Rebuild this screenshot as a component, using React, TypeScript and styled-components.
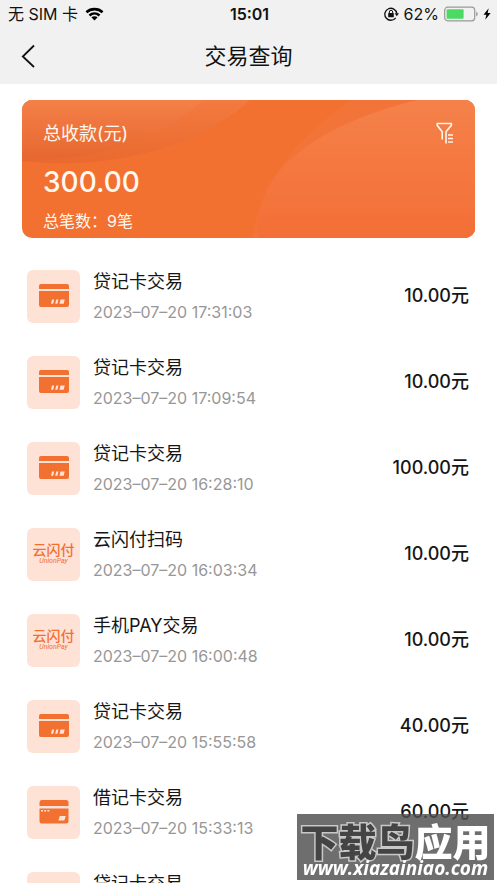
import React from "react";
import styled, { createGlobalStyle } from "styled-components";

const GlobalStyle = createGlobalStyle`
  * { box-sizing: border-box; }
  body {
    margin: 0;
    background: #fff;
    color: #161616;
    font-family: Inter, "Noto Sans CJK SC", sans-serif;
  }
  h1, p, ul { margin: 0; padding: 0; font-weight: 400; }
`;

const Screen = styled.div`
  display: flex;
  flex-direction: column;
  height: 100vh;
  overflow: hidden;
`;

const TopArea = styled.header`
  flex: none;
  background: #f1f1f1;
  color: #111;
`;

const StatusBar = styled.div`
  display: grid;
  grid-template-columns: 1fr auto 1fr;
  align-items: center;
  height: 28px;
  padding: 0 6px 0 8px;
  font-size: 16px;
  line-height: 28px;
`;

const StatusGroup = styled.div<{ $end?: boolean }>`
  display: flex;
  align-items: center;
  justify-content: ${(p) => (p.$end ? "flex-end" : "flex-start")};
  gap: ${(p) => (p.$end ? 5 : 7)}px;
`;

const Clock = styled.time`
  font-weight: 600;
`;

const NavBar = styled.nav`
  display: grid;
  grid-template-columns: 56px 1fr 56px;
  align-items: center;
  height: 56px;
`;

const IconButton = styled.button`
  display: flex;
  justify-content: center;
  padding: 0;
  border: 0;
  background: none;
  color: inherit;
  cursor: pointer;
`;

const Title = styled.h1`
  text-align: center;
  font-size: 22px;
  line-height: 32px;
`;

const Content = styled.main`
  flex: 1;
  min-height: 0;
  overflow-y: auto;
  scrollbar-width: none;
  padding: 16px 22px 0;
`;

const Summary = styled.section`
  position: relative;
  display: flex;
  justify-content: space-between;
  align-items: flex-start;
  height: 138px;
  padding: 22px 21px;
  border-radius: 10px;
  overflow: hidden;
  background: #f27030;
  color: #fff8f0;
`;

const Backdrop = styled.svg`
  position: absolute;
  inset: 0;
  width: 100%;
  height: 100%;
`;

const Totals = styled.div`
  position: relative;
`;

const TotalLabel = styled.p`
  font-size: 18px;
  line-height: 24px;
`;

const TotalAmount = styled.p`
  margin-top: 16px;
  font-size: 28px;
  font-weight: 500;
  line-height: 40px;
`;

const TotalCount = styled.p`
  margin-top: 7px;
  font-size: 16px;
  line-height: 24px;
`;

const FilterButton = styled(IconButton)`
  position: relative;
`;

const List = styled.ul`
  list-style: none;
  padding: 15px 6px 0 5px;
`;

const Row = styled.li`
  display: flex;
  align-items: center;
  gap: 13px;
  height: 86px;
`;

const Tile = styled.div`
  display: flex;
  flex-direction: column;
  align-items: center;
  justify-content: center;
  flex: none;
  width: 53px;
  height: 53px;
  border-radius: 6px;
  background: #ffe2d6;
  color: #f27030;
`;

const PayName = styled.span`
  font-size: 14px;
  font-weight: 500;
  line-height: 14px;
`;

const PaySub = styled.span`
  font-family: Roboto, sans-serif;
  font-size: 7px;
  font-style: italic;
  line-height: 8px;
`;

const Info = styled.div`
  flex: 1;
`;

const Name = styled.p`
  font-size: 18px;
  line-height: 28px;
`;

const Stamp = styled.p`
  margin-top: 4px;
  color: #979797;
  font-size: 16px;
  line-height: 24px;
`;

const Amount = styled.span`
  font-size: 18px;
  font-weight: 500;
  line-height: 28px;
`;

const Watermark = styled.aside`
  position: fixed;
  right: 3px;
  bottom: 3px;
  display: flex;
  flex-direction: column;
  align-items: center;
  width: 197px;
  height: 66px;
  padding-top: 8px;
  background: rgba(78, 78, 78, 0.82);
  color: #fff;
`;

const MarkName = styled.span`
  font-family: "Noto Sans CJK SC", sans-serif;
  font-size: 38px;
  font-weight: 900;
  line-height: 36px;
  white-space: nowrap;
`;

const MarkDark = styled.span`
  color: #444;
  -webkit-text-stroke: 3px #c8c8c8;
  paint-order: stroke fill;
`;

const MarkSite = styled.span`
  font-family: "Open Sans", sans-serif;
  font-size: 19px;
  font-weight: 700;
  font-style: italic;
  line-height: 20px;
`;

type Kind = "credit" | "debit" | "union";
interface Transaction {
  kind: Kind;
  name: string;
  time: string;
  amount: string;
}

const transactions: Transaction[] = [
  { kind: "credit", name: "贷记卡交易", time: "17:31:03", amount: "10.00" },
  { kind: "credit", name: "贷记卡交易", time: "17:09:54", amount: "10.00" },
  { kind: "credit", name: "贷记卡交易", time: "16:28:10", amount: "100.00" },
  { kind: "union", name: "云闪付扫码", time: "16:03:34", amount: "10.00" },
  { kind: "union", name: "手机PAY交易", time: "16:00:48", amount: "10.00" },
  { kind: "credit", name: "贷记卡交易", time: "15:55:58", amount: "40.00" },
  { kind: "debit", name: "借记卡交易", time: "15:33:13", amount: "60.00" },
  { kind: "credit", name: "贷记卡交易", time: "15:30:26", amount: "60.00" },
];

const WifiIcon = () => (
  <svg width="19" height="14" viewBox="0 0 20 14" fill="none" stroke="#000" strokeWidth="2.7" aria-hidden="true">
    <path d="M1.5 5.2C6.2.8 13.8.8 18.500 5.200M4.700 8.500C7.800 5.700 12.200 5.700 15.300 8.500" />
    <path d="M6.700 10.500C8.600 8.900 11.400 8.900 13.300 10.500L10 13.800Z" fill="#000" stroke="none" />
  </svg>
);

const RotationLockIcon = () => (
  <svg width="15" height="14" viewBox="0 0 15 14" fill="none" stroke="#111" strokeWidth="1.3" aria-hidden="true">
    <path d="M11.700 10.800A6 6 0 1 1 12.800 6.500" />
    <path d="M10.600 6.200H15L12.800 9.200Z" fill="#111" stroke="none" />
    <rect x="4.200" y="6" width="5.600" height="4.300" rx=".6" fill="#111" stroke="none" />
    <path d="M5.300 6V5a1.700 1.700 0 0 1 3.400 0v1" strokeWidth="1" />
  </svg>
);

const BatteryIcon = () => (
  <svg width="34" height="16" viewBox="0 0 34 16" aria-hidden="true">
    <rect x=".7" y="1.200" width="30" height="13.600" rx="3" fill="none" stroke="#999" strokeWidth="1.200" />
    <rect x="2.600" y="3.200" width="17" height="9.600" rx="1" fill="#4cd964" />
    <path d="M32.200 5.500q1.600 1 1.600 2.500t-1.600 2.500z" fill="#999" />
  </svg>
);

const BoltIcon = () => (
  <svg width="8" height="14" viewBox="0 0 9 14" aria-hidden="true">
    <path d="M6.400.4.600 7.900h3.200L2.500 13.600 8.600 5.800H5.200z" fill="#000" />
  </svg>
);

const BackIcon = () => (
  <svg width="14" height="24" viewBox="0 0 14 24" fill="none" stroke="#111" strokeWidth="1.800" aria-hidden="true">
    <path d="M13 1.500 1.800 12.500 13 23" />
  </svg>
);

const FilterIcon = () => (
  <svg width="18" height="22" viewBox="0 0 18 22" fill="none" stroke="#fff3e8" strokeWidth="1.700" strokeLinejoin="round" aria-hidden="true">
    <path d="M6.200 17.500V9.700L1.200 3.400V1.500H15.300V3.400L10 9.700V21.500" />
    <path d="M12 13h5M12 16.500h5M12 20h5" />
  </svg>
);

const SummaryBackdrop = () => (
  <Backdrop viewBox="0 0 453 138" preserveAspectRatio="none" aria-hidden="true">
    <defs>
      <linearGradient id="leftShade" x2="0" y2="1">
        <stop stopColor="#f48048" />
        <stop offset="1" stopColor="#e6672f" />
      </linearGradient>
      <linearGradient id="leftOuter" x2="0" y2="1">
        <stop stopColor="#f37a40" />
        <stop offset="1" stopColor="#ea6a2e" />
      </linearGradient>
      <linearGradient id="rightShade" x2="0" y2="1">
        <stop stopColor="#f5814a" />
        <stop offset="1" stopColor="#f36f36" />
      </linearGradient>
    </defs>
    <path d="M0 0H228C184 42 96 72 0 61Z" fill="url(#leftOuter)" />
    <path d="M0 0H181C143 36 82 61 0 61Z" fill="url(#leftShade)" />
    <path d="M453 0H329C288 29 240 72 230 138H453Z" fill="#f37439" />
    <path d="M453 0H396C313 19 226 66 237 138H453Z" fill="url(#rightShade)" />
  </Backdrop>
);

const CreditIcon = () => (
  <svg width="30" height="24" viewBox="0 0 30 24" fill="currentColor" aria-hidden="true">
    <path d="M2 0H28Q30 0 30 2V5H0V2Q0 0 2 0ZM0 7H30V21Q30 23 28 23H2Q0 23 0 21Z" />
    <path d="M13 15.500h2.200l-1 4.200H12zM17.200 15.500h2.200l-1 4.200h-2.200zM21.500 15.500h4.200l-1 4.200h-4.200z" fill="#ffe2d6" />
  </svg>
);

const DebitIcon = () => (
  <svg width="30" height="24" viewBox="0 0 30 24" fill="currentColor" aria-hidden="true">
    <path d="M2.500 0H27Q29.500 0 29.500 2.500V6H.5V2.500Q.5 0 2.500 0ZM.5 8.500H29.500V21Q29.500 23.500 27 23.500H2.500Q.5 23.500.5 21Z" />
    <path d="M2 10h2v1.500H2zM5.200 10h2v1.500h-2zM8.400 10h2v1.500h-2zM20.800 16h6l-1.500 4.500h-6z" fill="#ffe2d6" />
  </svg>
);

const KindIcon = ({ kind }: { kind: Kind }) => {
  if (kind === "credit") return <CreditIcon />;
  if (kind === "debit") return <DebitIcon />;
  return (
    <>
      <PayName>云闪付</PayName>
      <PaySub>UnionPay</PaySub>
    </>
  );
};

export default function App() {
  return (
    <Screen>
      <GlobalStyle />
      <TopArea>
        <StatusBar>
          <StatusGroup>
            <span>无 SIM 卡</span>
            <WifiIcon />
          </StatusGroup>
          <Clock>15:01</Clock>
          <StatusGroup $end>
            <RotationLockIcon />
            <span>62%</span>
            <BatteryIcon />
            <BoltIcon />
          </StatusGroup>
        </StatusBar>
        <NavBar>
          <IconButton type="button" aria-label="返回">
            <BackIcon />
          </IconButton>
          <Title>交易查询</Title>
        </NavBar>
      </TopArea>
      <Content>
        <Summary>
          <SummaryBackdrop />
          <Totals>
            <TotalLabel>总收款(元)</TotalLabel>
            <TotalAmount>300.00</TotalAmount>
            <TotalCount>总笔数：9笔</TotalCount>
          </Totals>
          <FilterButton type="button" aria-label="筛选">
            <FilterIcon />
          </FilterButton>
        </Summary>
        <List>
          {transactions.map((t) => (
            <Row key={t.time}>
              <Tile>
                <KindIcon kind={t.kind} />
              </Tile>
              <Info>
                <Name>{t.name}</Name>
                <Stamp>2023–07–20 {t.time}</Stamp>
              </Info>
              <Amount>{t.amount}元</Amount>
            </Row>
          ))}
        </List>
      </Content>
      <Watermark>
        <MarkName>
          <MarkDark>下载鸟</MarkDark>应用
        </MarkName>
        <MarkSite>www.xiazainiao.com</MarkSite>
      </Watermark>
    </Screen>
  );
}
